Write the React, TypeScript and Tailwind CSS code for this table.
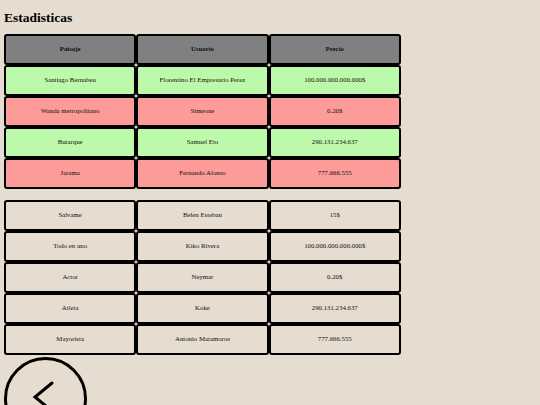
import React from "react";

type Row = { a: string; b: string; c: string; tone: "head" | "green" | "red" | "plain" };

const top: Row[] = [
  { a: "Paisaje", b: "Usuario", c: "Precio", tone: "head" },
  { a: "Santiago Bernabeu", b: "Florentino El Empresario Perez", c: "100.000.000.000.000$", tone: "green" },
  { a: "Wanda metropolitano", b: "Simeone", c: "0.20$", tone: "red" },
  { a: "Butarque", b: "Samuel Eto", c: "290.131.234.637", tone: "green" },
  { a: "Jarama", b: "Fernando Alonso", c: "777.666.555", tone: "red" },
];

const bottom: Row[] = [
  { a: "Salvame", b: "Belen Esteban", c: "15$", tone: "plain" },
  { a: "Todo en uno", b: "Kiko Rivera", c: "100.000.000.000.000$", tone: "plain" },
  { a: "Actor", b: "Neymar", c: "0.20$", tone: "plain" },
  { a: "Atleta", b: "Koke", c: "290.131.234.637", tone: "plain" },
  { a: "Mayorista", b: "Antonio Matamoros", c: "777.666.555", tone: "plain" },
];

function Cell({ text, tone }: { text: string; tone: Row["tone"] }) {
  const bg =
    tone === "head"
      ? "bg-[#808080] font-bold"
      : tone === "green"
      ? "bg-[#bdf9aa]"
      : tone === "red"
      ? "bg-[#fc9b98]"
      : "bg-transparent";
  return (
    <div
      className={`h-[31px] border-2 border-black rounded-[3px] flex items-center justify-center text-[6.8px] text-[#111] leading-none ${bg}`}
    >
      {text}
    </div>
  );
}

function Table({ rows }: { rows: Row[] }) {
  return (
    <div className="grid grid-cols-[132.3px_132.3px_132.3px] w-[397px]">
      {rows.map((r, i) => (
        <React.Fragment key={i}>
          <Cell text={r.a} tone={r.tone} />
          <Cell text={r.b} tone={r.tone} />
          <Cell text={r.c} tone={r.tone} />
        </React.Fragment>
      ))}
    </div>
  );
}

export default function App() {
  return (
    <div
      className="w-[540px] h-[405px] overflow-hidden bg-[#e6ddd0] pl-[4px] pt-[10px]"
      style={{ fontFamily: '"Liberation Serif", "Times New Roman", serif' }}
    >
      <h1 className="text-[13.5px] font-bold leading-[15.5px] text-black">Estadisticas</h1>
      <div className="mt-[8.5px]">
        <Table rows={top} />
      </div>
      <div className="mt-[11px]">
        <Table rows={bottom} />
      </div>
      <div className="mt-[2px] w-[83px] h-[83px] rounded-full border-[3px] border-black relative">
        <svg
          className="absolute left-[-3px] top-[-3px]"
          width="83"
          height="83"
          viewBox="0 0 83 83"
          fill="none"
        >
          <path d="M48 26 L31 40 L48 54" stroke="black" strokeWidth="3" strokeLinecap="round" strokeLinejoin="miter" />
        </svg>
      </div>
    </div>
  );
}
